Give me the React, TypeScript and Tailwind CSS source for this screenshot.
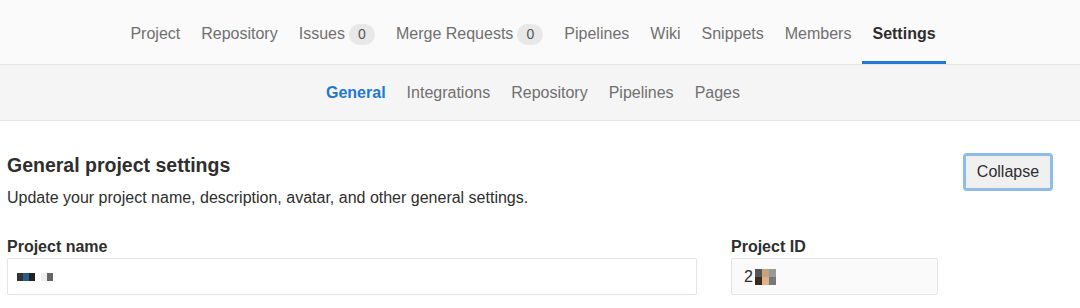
import React from "react";

const font = { fontFamily: '"Liberation Sans", Arial, sans-serif' };

function Badge({ n }: { n: number }) {
  return (
    <span className="ml-[4px] inline-flex h-[21px] min-w-[26px] items-center justify-center rounded-full bg-[#e8e8e8] px-[8px] text-[14px] text-[#555]">
      {n}
    </span>
  );
}

const tabs = [
  { label: "Project" },
  { label: "Repository" },
  { label: "Issues", badge: 0 },
  { label: "Merge Requests", badge: 0 },
  { label: "Pipelines" },
  { label: "Wiki" },
  { label: "Snippets" },
  { label: "Members" },
  { label: "Settings", active: true },
];

const subTabs = ["General", "Integrations", "Repository", "Pipelines", "Pages"];

function Pixels({ colors }: { colors: string[] }) {
  return (
    <span className="inline-flex h-[8px] align-middle">
      {colors.map((c, i) => (
        <span key={i} className="h-[8px] w-[6px]" style={{ background: c }} />
      ))}
    </span>
  );
}

export default function App() {
  return (
    <div className="h-[308px] w-[1080px] overflow-hidden bg-white text-[#2e2e2e]" style={font}>
      <div className="flex h-[65px] justify-center border-b border-[#e5e5e5] bg-[#fafafa] pr-[14px]">
        <div className="flex h-full">
          {tabs.map((t) => (
            <div
              key={t.label}
              className={
                "flex h-full items-center px-[10.5px] text-[16px] " +
                (t.active
                  ? "border-b-[3px] border-[#1f78d1] pt-[7px] font-bold text-[#2e2e2e]"
                  : "pt-[4px] text-[#707070]")
              }
            >
              {t.label}
              {t.badge !== undefined && <Badge n={t.badge} />}
            </div>
          ))}
        </div>
      </div>
      <div className="flex h-[56px] items-center justify-center gap-[21px] border-b border-[#e5e5e5] bg-[#f5f5f5] pr-[14px] pt-[1px] text-[16px]">
        {subTabs.map((s, i) => (
          <span key={s} className={i === 0 ? "font-bold text-[#1f78d1]" : "text-[#707070]"}>
            {s}
          </span>
        ))}
      </div>
      <div className="px-[7px] pt-[32px]">
        <div className="flex items-start justify-between pr-[20px]">
          <div>
            <div className="text-[19.5px] font-bold leading-[24px] text-[#2e2e2e]">General project settings</div>
            <div className="mt-[11px] text-[16px] leading-[19px] text-[#2e2e2e]">
              Update your project name, description, avatar, and other general settings.
            </div>
          </div>
          <button className="h-[38px] w-[90px] rounded-[4px] border-[3px] border-[#8fbce6] bg-[#f0f0f0] text-[16px] text-[#2e2e2e]">
            Collapse
          </button>
        </div>
        <div className="mt-[30px] flex gap-[34px]">
          <div className="w-[690px]">
            <div className="text-[16px] font-bold leading-[19px]">Project name</div>
            <div className="mt-[2px] flex h-[37px] items-center rounded-[2px] border border-[#e5e5e5] bg-white px-[9px]">
              <Pixels colors={["#333", "#2a5b8a", "#222", "#fff", "#eee", "#666"]} />
            </div>
          </div>
          <div className="w-[207px]">
            <div className="text-[16px] font-bold leading-[19px]">Project ID</div>
            <div className="mt-[2px] flex h-[37px] items-center rounded-[2px] border border-[#e5e5e5] bg-[#fafafa] px-[12px] text-[16px]">
              2
              <span className="ml-[2px] inline-flex flex-col">
                <span className="flex">
                  <span className="h-[8px] w-[7px] bg-[#555]" />
                  <span className="h-[8px] w-[7px] bg-[#c9a27c]" />
                  <span className="h-[8px] w-[7px] bg-[#999]" />
                </span>
                <span className="flex">
                  <span className="h-[8px] w-[7px] bg-[#3a2a1a]" />
                  <span className="h-[8px] w-[7px] bg-[#e0b088]" />
                  <span className="h-[8px] w-[7px] bg-[#777]" />
                </span>
              </span>
            </div>
          </div>
        </div>
      </div>
    </div>
  );
}
